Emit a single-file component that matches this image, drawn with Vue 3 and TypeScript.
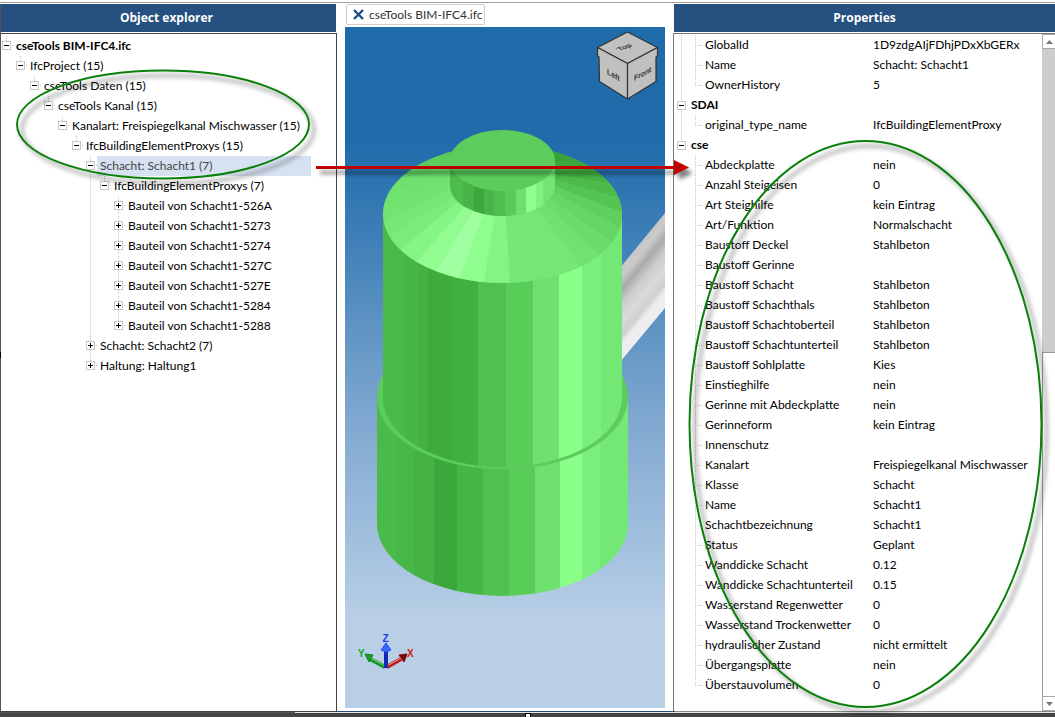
<script setup lang="ts">
import { computed, ref } from 'vue'

interface TreeNode {
  id: number
  level: number
  label: string
  open: boolean
  guides: number[]
}

interface Property {
  name: string
  value: string
}

interface PropertyGroup {
  title: string
  open: boolean
  items: Property[]
}

interface Facet {
  points: string
  color: string
}

const nodes = ref<TreeNode[]>([
  { id: 1, level: 0, label: 'cseTools BIM-IFC4.ifc', open: true, guides: [] },
  { id: 2, level: 1, label: 'IfcProject (15)', open: true, guides: [] },
  { id: 3, level: 2, label: 'cseTools Daten (15)', open: true, guides: [] },
  { id: 4, level: 3, label: 'cseTools Kanal (15)', open: true, guides: [] },
  { id: 5, level: 4, label: 'Kanalart: Freispiegelkanal Mischwasser (15)', open: true, guides: [] },
  { id: 6, level: 5, label: 'IfcBuildingElementProxys (15)', open: true, guides: [] },
  { id: 7, level: 6, label: 'Schacht: Schacht1 (7)', open: true, guides: [6] },
  { id: 8, level: 7, label: 'IfcBuildingElementProxys (7)', open: true, guides: [6] },
  { id: 9, level: 8, label: 'Bauteil von Schacht1-526A', open: false, guides: [6, 8] },
  { id: 10, level: 8, label: 'Bauteil von Schacht1-5273', open: false, guides: [6, 8] },
  { id: 11, level: 8, label: 'Bauteil von Schacht1-5274', open: false, guides: [6, 8] },
  { id: 12, level: 8, label: 'Bauteil von Schacht1-527C', open: false, guides: [6, 8] },
  { id: 13, level: 8, label: 'Bauteil von Schacht1-527E', open: false, guides: [6, 8] },
  { id: 14, level: 8, label: 'Bauteil von Schacht1-5284', open: false, guides: [6, 8] },
  { id: 15, level: 8, label: 'Bauteil von Schacht1-5288', open: false, guides: [6] },
  { id: 16, level: 6, label: 'Schacht: Schacht2 (7)', open: false, guides: [6] },
  { id: 17, level: 6, label: 'Haltung: Haltung1', open: false, guides: [] },
])
const selectedId = ref(7)

const visibleNodes = computed(() => {
  const shown: TreeNode[] = []
  let hiddenBelow = Infinity
  for (const node of nodes.value) {
    if (node.level > hiddenBelow) continue
    hiddenBelow = node.open ? Infinity : node.level
    shown.push(node)
  }
  return shown
})

const groups = ref<PropertyGroup[]>([
  {
    title: '',
    open: true,
    items: [
      { name: 'GlobalId', value: '1D9zdgAIjFDhjPDxXbGERx' },
      { name: 'Name', value: 'Schacht: Schacht1' },
      { name: 'OwnerHistory', value: '5' },
    ],
  },
  {
    title: 'SDAI',
    open: true,
    items: [{ name: 'original_type_name', value: 'IfcBuildingElementProxy' }],
  },
  {
    title: 'cse',
    open: true,
    items: [
      { name: 'Abdeckplatte', value: 'nein' },
      { name: 'Anzahl Steigeisen', value: '0' },
      { name: 'Art Steighilfe', value: 'kein Eintrag' },
      { name: 'Art/Funktion', value: 'Normalschacht' },
      { name: 'Baustoff Deckel', value: 'Stahlbeton' },
      { name: 'Baustoff Gerinne', value: '' },
      { name: 'Baustoff Schacht', value: 'Stahlbeton' },
      { name: 'Baustoff Schachthals', value: 'Stahlbeton' },
      { name: 'Baustoff Schachtoberteil', value: 'Stahlbeton' },
      { name: 'Baustoff Schachtunterteil', value: 'Stahlbeton' },
      { name: 'Baustoff Sohlplatte', value: 'Kies' },
      { name: 'Einstieghilfe', value: 'nein' },
      { name: 'Gerinne mit Abdeckplatte', value: 'nein' },
      { name: 'Gerinneform', value: 'kein Eintrag' },
      { name: 'Innenschutz', value: '' },
      { name: 'Kanalart', value: 'Freispiegelkanal Mischwasser' },
      { name: 'Klasse', value: 'Schacht' },
      { name: 'Name', value: 'Schacht1' },
      { name: 'Schachtbezeichnung', value: 'Schacht1' },
      { name: 'Status', value: 'Geplant' },
      { name: 'Wanddicke Schacht', value: '0.12' },
      { name: 'Wanddicke Schachtunterteil', value: '0.15' },
      { name: 'Wasserstand Regenwetter', value: '0' },
      { name: 'Wasserstand Trockenwetter', value: '0' },
      { name: 'hydraulischer Zustand', value: 'nicht ermittelt' },
      { name: 'Übergangsplatte', value: 'nein' },
      { name: 'Überstauvolumen', value: '0' },
    ],
  },
])

/* Vertical slices of the cylinders: left edge, right edge, colour */
type Slice = [number, number, string]

const neckSlices: Slice[] = [
  [450, 463, '#4dbc4d'], [463, 474, '#46b446'], [474, 484, '#3ba83b'], [484, 494, '#47b547'],
  [494, 505, '#4fc04f'], [505, 516, '#57cd57'], [516, 526, '#6fe06f'], [526, 536, '#8cff8c'],
  [536, 543, '#7ff27f'], [543, 555, '#72e672'],
]
const shaftSlices: Slice[] = [
  [383, 406, '#49ba49'], [406, 418, '#46b746'], [418, 428, '#43b243'], [428, 452, '#3dac3d'],
  [452, 478, '#40b040'], [478, 506, '#4fc14f'], [506, 533, '#58ce58'], [533, 559, '#6fe16f'],
  [559, 582, '#8aff8a'], [582, 601, '#7bef7b'], [601, 622, '#74e874'],
]
const baseSlices: Slice[] = [
  [377, 397, '#4aba4a'], [397, 414, '#47b847'], [414, 434, '#44b344'], [434, 457, '#3ba83b'],
  [457, 483, '#45b545'], [483, 509, '#4fc14f'], [509, 535, '#58ce58'], [535, 560, '#6fe16f'],
  [560, 582, '#8aff8a'], [582, 600, '#7bef7b'], [600, 629, '#74e874'],
]

const coneColors: string[] = [
  '#82f582', '#75e875', '#74e774', '#74e774', '#70e270', '#6cdc6c', '#66d666', '#5fcf5f',
  '#54c454', '#4cbb4c', '#44b244', '#3ba83b', '#38a338', '#38a338', '#40b040', '#48ba48',
  '#52c652', '#58ca58', '#5ccc5c', '#66d966', '#6ee06e', '#70e270', '#72e472', '#76e876',
  '#79ec79', '#84f684', '#92fc92', '#a0ffa0', '#8eff8e',
]

function rim(angle: number, rx: number, ry: number, cy: number): string {
  const x = 502.5 + rx * Math.sin(angle)
  const y = cy + ry * Math.cos(angle)
  return `${x.toFixed(1)},${y.toFixed(1)}`
}

const coneFacets = computed<Facet[]>(() => {
  const step = (2 * Math.PI) / coneColors.length
  const start = (-8.8 * Math.PI) / 180
  return coneColors.map((color, i) => {
    const a = start + i * step
    const b = a + step
    return {
      color,
      points: [rim(a, 52, 30, 186), rim(a, 122, 71, 214), rim(b, 122, 71, 214), rim(b, 52, 30, 186)].join(' '),
    }
  })
})
</script>

<template>
  <div class="app">
    <div class="topline"></div>
    <main class="workspace">
      <section class="panel explorer" aria-labelledby="explorer-title">
        <h2 id="explorer-title" class="title">Object explorer</h2>
        <ul class="tree">
          <li
            v-for="node in visibleNodes"
            :key="node.id"
            class="node"
            :class="{ root: node.level === 0, selected: node.id === selectedId }"
          >
            <span v-for="n in node.level" :key="n" class="step" :class="{ guide: node.guides.includes(n - 1) }"></span>
            <span class="knot" :class="{ through: node.guides.includes(node.level) }">
              <button
                class="toggle"
                :class="{ plus: !node.open }"
                :aria-label="`Toggle ${node.label}`"
                :aria-expanded="node.open"
                @click="node.open = !node.open"
              ></button>
            </span>
            <span class="label" @click="selectedId = node.id">{{ node.label }}</span>
          </li>
        </ul>
      </section>

      <section class="model" aria-label="Model view">
        <div class="tab">
          <button class="close" aria-label="Close">
            <svg viewBox="0 0 11 11" width="11" height="11">
              <path d="M1 1L10 10M10 1L1 10" stroke="#1f4e82" stroke-width="2.4" />
            </svg>
          </button>
          <span>cseTools BIM-IFC4.ifc</span>
        </div>
        <div class="viewport">
          <svg class="scene" viewBox="345 27 320 681" preserveAspectRatio="xMidYMid slice">
            <defs>
              <linearGradient id="sky" x1="0" y1="27" x2="0" y2="708" gradientUnits="userSpaceOnUse">
                <stop offset="0" stop-color="#206cab" />
                <stop offset="0.17" stop-color="#206cab" />
                <stop offset="0.34" stop-color="#4683ba" />
                <stop offset="0.5" stop-color="#6d9dc9" />
                <stop offset="0.61" stop-color="#87acd3" />
                <stop offset="0.75" stop-color="#a0bfdd" />
                <stop offset="0.87" stop-color="#b8cfe6" />
                <stop offset="1" stop-color="#b8cfe6" />
              </linearGradient>
              <linearGradient id="pipe" x1="622" y1="265" x2="668" y2="303" gradientUnits="userSpaceOnUse">
                <stop offset="0" stop-color="#c6c6c6" />
                <stop offset="0.12" stop-color="#cbcbcb" />
                <stop offset="0.26" stop-color="#aaaaaa" />
                <stop offset="0.42" stop-color="#cccccc" />
                <stop offset="0.6" stop-color="#dadada" />
                <stop offset="0.75" stop-color="#d0d0d0" />
                <stop offset="0.85" stop-color="#eeeeee" />
                <stop offset="1" stop-color="#eeeeee" />
              </linearGradient>
              <clipPath id="cone"><ellipse cx="502.5" cy="214" rx="119.5" ry="69" /></clipPath>
              <clipPath id="neck">
                <path d="M450 160V186A52.5 30 0 0 0 555 186V160Z" />
              </clipPath>
              <clipPath id="shaft">
                <path d="M383 214V398A119.5 69 0 0 0 622 398V214Z" />
              </clipPath>
              <clipPath id="base">
                <path d="M377 397V524A125.5 72 0 0 0 628 524V397Z" />
              </clipPath>
            </defs>
            <rect x="-655" y="27" width="2320" height="681" fill="url(#sky)" />
            <polygon points="610,280 665,213 665,308 610,374" fill="url(#pipe)" />
            <g clip-path="url(#base)" shape-rendering="crispEdges">
              <rect v-for="s in baseSlices" :key="s[0]" :x="s[0]" y="397" :width="s[1] - s[0]" height="200" :fill="s[2]" />
            </g>
            <ellipse cx="502.5" cy="397" rx="125.5" ry="72.5" fill="#5ccc5c" />
            <g clip-path="url(#shaft)" shape-rendering="crispEdges">
              <rect v-for="s in shaftSlices" :key="s[0]" :x="s[0]" y="214" :width="s[1] - s[0]" height="255" :fill="s[2]" />
            </g>
            <ellipse cx="502.5" cy="214" rx="119.5" ry="69" fill="#5ccc5c" />
            <g clip-path="url(#cone)" shape-rendering="crispEdges">
              <polygon v-for="(f, i) in coneFacets" :key="i" :points="f.points" :fill="f.color" />
            </g>
            <g clip-path="url(#neck)" shape-rendering="crispEdges">
              <rect v-for="s in neckSlices" :key="s[0]" :x="s[0]" y="160" :width="s[1] - s[0]" height="58" :fill="s[2]" />
            </g>
            <ellipse cx="502.5" cy="160.5" rx="52.5" ry="30.5" fill="#5ccc5c" />

            <g stroke="#333" stroke-width="1.2" stroke-linejoin="round">
              <path d="M627.5 32L657.5 47.5L627.5 63.5L597.5 47.5Z" fill="#c0c0c0" />
              <path d="M597.5 47.5L627.5 63.5V99L599.5 81.5L599 57L597.5 56Z" fill="#c0c0c0" />
              <path d="M657.5 47.5L627.5 63.5V99L656 81.5V57L657.5 56Z" fill="#c0c0c0" />
            </g>
            <g class="cube-text">
              <text transform="matrix(0.9 -0.35 0.75 0.5 620 51)">Top</text>
              <text transform="matrix(0.85 0.5 0 1 607 74)">Left</text>
              <text transform="matrix(0.85 -0.45 0 1 634 81)">Front</text>
            </g>

            <g stroke-width="4">
              <path d="M385 667L370 659" stroke="#159325" />
              <path d="M385 666L370 658" stroke="#6fd67a" stroke-width="1" />
              <path d="M365 654L373 655L369 662Z" fill="#19a32a" stroke="#127f1f" stroke-width="1" />
              <path d="M387 667L401 659" stroke="#bb1b1b" />
              <path d="M387 666L401 658" stroke="#f0a0a0" stroke-width="1" />
              <path d="M407 654L399 655L404 662Z" fill="#7c0808" stroke="#7c0808" stroke-width="1" />
              <path d="M386 668V650" stroke="#1528b5" />
              <path d="M386 643L391 650L386 652L381 650Z" fill="#3767ff" stroke="#2850ee" stroke-width="1" />
            </g>
            <g class="axis-text">
              <text x="358" y="657" fill="#12a422">Y</text>
              <text x="382.5" y="642" fill="#1c3cf0">Z</text>
              <text x="407" y="657" fill="#cf1717">X</text>
            </g>
          </svg>
        </div>
      </section>

      <section class="panel properties" aria-labelledby="properties-title">
        <h2 id="properties-title" class="title">Properties</h2>
        <div class="sheet">
          <table class="grid" aria-labelledby="properties-title">
            <colgroup>
              <col class="col-name" />
              <col />
            </colgroup>
            <tbody v-for="(group, g) in groups" :key="g" :class="{ last: g === groups.length - 1 }">
              <tr v-if="group.title">
                <th colspan="2" scope="rowgroup">
                  <span class="cell">
                    <span class="knot" :class="{ through: g < groups.length - 1 }">
                      <button
                        class="toggle"
                        :class="{ plus: !group.open }"
                        :aria-label="`Toggle ${group.title}`"
                        :aria-expanded="group.open"
                        @click="group.open = !group.open"
                      ></button>
                    </span>
                    <span class="label">{{ group.title }}</span>
                  </span>
                </th>
              </tr>
              <template v-if="group.open">
                <tr v-for="item in group.items" :key="item.name">
                  <td>
                    <span class="cell"><span class="step outer"></span><span class="branch"></span>{{ item.name }}</span>
                  </td>
                  <td>{{ item.value }}</td>
                </tr>
              </template>
            </tbody>
          </table>
          <div class="scrollbar">
            <button class="arrow" aria-label="Scroll up">
              <svg viewBox="0 0 7 4" width="7" height="4"><path d="M0 4L3.5 0L7 4Z" fill="#777" /></svg>
            </button>
            <div class="track"></div>
            <div class="thumb"></div>
            <button class="arrow" aria-label="Scroll down">
              <svg viewBox="0 0 7 4" width="7" height="4"><path d="M0 0L3.5 4L7 0Z" fill="#777" /></svg>
            </button>
          </div>
        </div>
      </section>
    </main>
    <footer class="bottom"><span class="handle"></span></footer>

    <svg class="marks" viewBox="0 0 1055 717" preserveAspectRatio="none" aria-hidden="true">
      <defs>
        <filter id="soft" x="0" y="0" width="1055" height="717" filterUnits="userSpaceOnUse">
          <feGaussianBlur stdDeviation="2" />
        </filter>
      </defs>
      <g filter="url(#soft)" transform="translate(5 5)" fill="none" stroke="#000" stroke-opacity="0.26" stroke-width="4">
        <ellipse cx="163" cy="124.5" rx="146" ry="54" />
        <ellipse cx="865.5" cy="424" rx="176" ry="283" />
      </g>
      <g filter="url(#soft)" transform="translate(4 5)" opacity="0.5">
        <path d="M316 166H675V160L689 168L675 175V169H316Z" />
      </g>
      <g fill="none" stroke="#0a800a" stroke-width="2">
        <ellipse cx="163" cy="124.5" rx="146" ry="54" />
        <ellipse cx="865.5" cy="424" rx="176" ry="283" />
      </g>
      <path d="M316 166H674V160L689 167.5L674 175V169H316Z" fill="#c00000" />
      <rect x="0" y="352" width="1" height="6" />
    </svg>
  </div>
</template>

<style>
body {
  margin: 0;
}
</style>

<style scoped>
.app {
  position: relative;
  display: flex;
  flex-direction: column;
  box-sizing: border-box;
  min-height: 100vh;
  overflow: hidden;
  background: #fff;
  color: #000;
  font: 12px/20px Lato, 'Open Sans', sans-serif;
}

.topline {
  height: 1px;
  margin-top: 2px;
  margin-bottom: 1px;
  background: #a0a0a0;
}

.workspace {
  flex: 1;
  display: grid;
  grid-template-columns: 337fr 336fr 382fr;
}

.panel,
.model {
  display: flex;
  flex-direction: column;
  min-width: 0;
}

.title {
  margin: 0 0 1px;
  background: #265080;
  color: #fff;
  font: 700 12px/28px 'Open Sans', sans-serif;
  text-align: center;
}

.explorer {
  border-left: 1px solid #555;
}

.explorer .title {
  margin-right: 1px;
  padding-right: 4px;
}

.tree {
  flex: 1;
  margin: 0;
  padding: 2px 0 0;
  border: solid #444;
  border-width: 1px 1px 0 0;
  list-style: none;
}

.node {
  display: flex;
  height: 20px;
  white-space: nowrap;
}

.step {
  flex: none;
  width: 14px;
}

.guide,
.outer {
  background: repeating-linear-gradient(to bottom, #c4c4c4 0 1px, transparent 1px 2px) 5px 0 / 1px 100% no-repeat;
}

.knot {
  flex: none;
  display: flex;
  align-items: flex-start;
  width: 12px;
  padding-top: 5px;
  padding-left: 1px;
  box-sizing: border-box;
  background:
    repeating-linear-gradient(to bottom, #c4c4c4 0 1px, transparent 1px 2px) 5px 0 / 1px 50% no-repeat,
    linear-gradient(#c4c4c4, #c4c4c4) 11px 9px / 1px 1px no-repeat;
}

.knot.through {
  background-size: 1px 100%, 1px 1px;
}

.toggle {
  width: 9px;
  height: 9px;
  padding: 0;
  border: 1px solid #c8c8c8;
  border-radius: 0;
  background: linear-gradient(#000, #000) center / 5px 1px no-repeat, #fff;
}

.toggle.plus {
  background:
    linear-gradient(#000, #000) center / 5px 1px no-repeat,
    linear-gradient(#000, #000) center / 1px 5px no-repeat,
    #fff;
}

.label {
  padding-left: 3px;
}

.root .label {
  font-weight: 700;
}

.selected .label {
  flex: 1;
  margin-right: 25px;
  background: #d6e1f1;
  color: #444;
}

.tab {
  display: flex;
  align-items: center;
  align-self: flex-start;
  gap: 5px;
  box-sizing: border-box;
  height: 21px;
  margin-left: 9px;
  padding: 0 2px 0 6px;
  border: 1px solid #cfcfcf;
  border-radius: 2px;
  color: #333;
  white-space: nowrap;
}

.close {
  display: flex;
  padding: 0;
  border: 0;
  background: none;
}

.viewport {
  position: relative;
  flex: 1;
  margin: 2px 8px 3px;
  background: #b8cfe6;
}

.scene {
  position: absolute;
  inset: 0;
  width: 100%;
  height: 100%;
}

.cube-text {
  fill: #333;
  font: 700 8px 'Liberation Sans', sans-serif;
}

.axis-text {
  font: 700 10px 'Liberation Sans', sans-serif;
}

.properties .title {
  margin-left: 1px;
}

.sheet {
  flex: 1;
  display: flex;
  border: solid #777;
  border-width: 1px 0 0 1px;
}

.grid {
  flex: 1;
  align-self: flex-start;
  min-width: 0;
  margin-top: 1px;
  border-collapse: collapse;
  table-layout: fixed;
}

.col-name {
  width: 199px;
}

.grid td,
.grid th {
  height: 20px;
  padding: 0;
  text-align: left;
  white-space: nowrap;
}

.grid th {
  font-weight: 700;
}

.cell {
  display: flex;
  height: 20px;
}

.grid .knot {
  width: 14px;
  padding-top: 6px;
  padding-left: 3px;
  background-position: 7px 0, 13px 10px;
}

.grid .step {
  width: 21px;
  background-position: 7px 0;
}

.last .outer {
  background: none;
}

.branch {
  flex: none;
  width: 10px;
  background:
    repeating-linear-gradient(to bottom, #c4c4c4 0 1px, transparent 1px 2px) 0 0 / 1px 100% no-repeat,
    repeating-linear-gradient(to right, #c4c4c4 0 1px, transparent 1px 2px) 0 10px / 7px 1px no-repeat;
}

tr:last-child .branch {
  background-size: 1px 50%, 7px 1px;
}

.scrollbar {
  flex: none;
  display: flex;
  flex-direction: column;
  width: 13px;
}

.arrow {
  display: flex;
  align-items: center;
  justify-content: center;
  flex: none;
  height: 15px;
  padding: 0;
  border: 1px solid #a8a8a8;
  border-right: 0;
  border-radius: 0;
  background: #fff;
}

.track {
  flex: 303;
  background: #cdcdcd;
}

.thumb {
  flex: 344;
  border: solid #999;
  border-width: 1px 0 0 1px;
}

.bottom {
  display: flex;
  justify-content: center;
  align-items: flex-end;
  height: 6px;
  background:
    linear-gradient(to right, #444 32%, #265080 32% 64%, #888 64%) 0 0 / 100% 1px no-repeat,
    linear-gradient(to right, #555 28%, #e8e8e8 28%) 0 1px / 100% 1px no-repeat,
    #444;
}

.handle {
  width: 4px;
  height: 3px;
  border: solid #000;
  border-width: 1px 1px 0;
  background: #fff;
}

.marks {
  position: absolute;
  inset: 0;
  width: 100%;
  height: 100%;
  pointer-events: none;
}
</style>
